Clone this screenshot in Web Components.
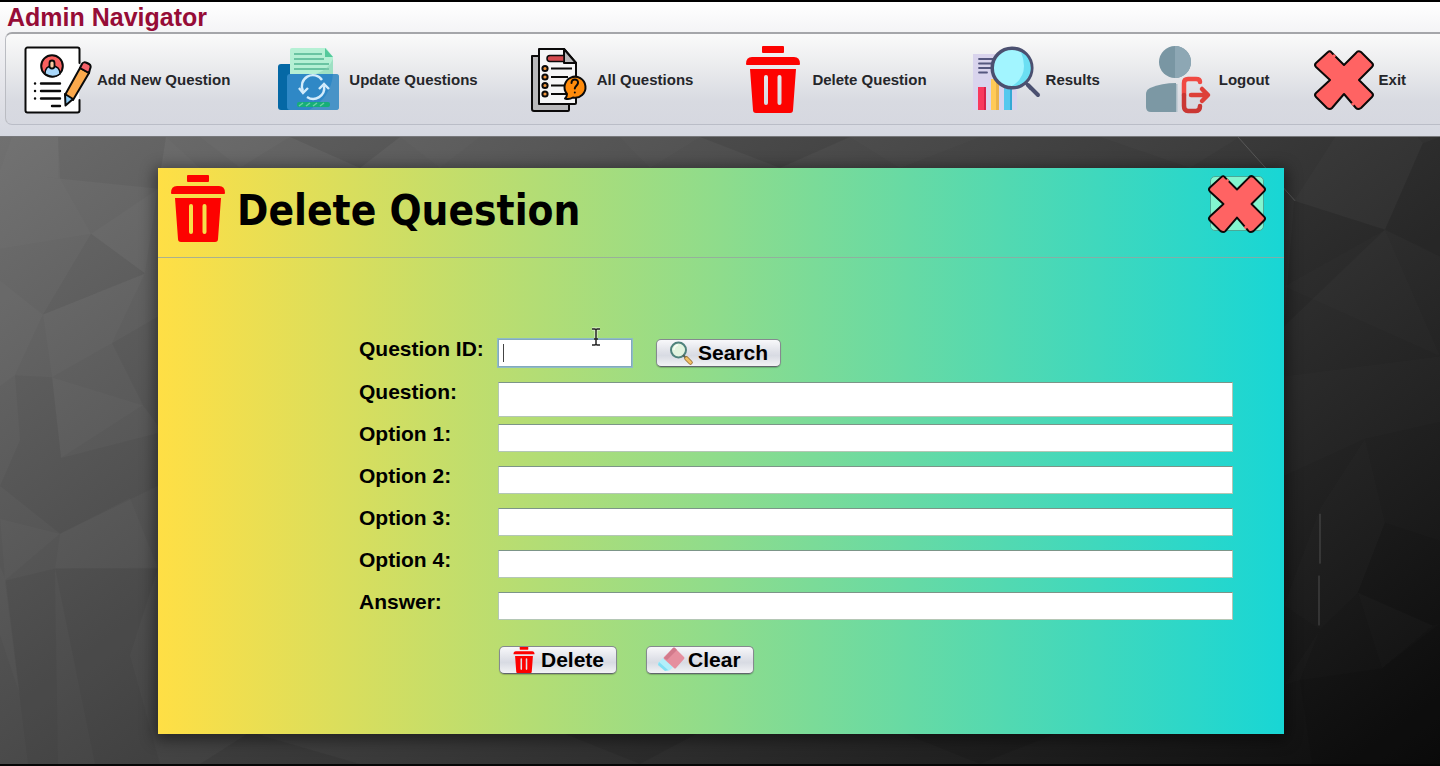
<!DOCTYPE html>
<html lang="en">
<head>
<meta charset="utf-8">
<title>Admin Navigator</title>
<style>
  body { margin: 0; font-family: "Liberation Sans", Arial, sans-serif; }
</style>
</head>
<body>
<admin-page></admin-page>

<script>
const TRASH = `
    <g fill="#fd0200">
      <rect x="26" y="2" width="22" height="7" rx="1"/>
      <path d="M16 13h42q6 0 6 7 0 1-1 1H11q-1 0-1-1 0-7 6-7z"/>
      <path fill-rule="evenodd" d="M14 25h46l-3 41q0 3-3 3H20q-3 0-3-3zM30 31q-2 0-2 2v26q0 2 2 2t2-2V33q0-2-2-2zM43.500 31q-2 0-2 2v26q0 2 2 2t2-2V33q0-2-2-2z"/>
    </g>`;

const ICONS = {
  add: ['0 0 72 72', `
    <g stroke="#0a0a0a" stroke-width="2" stroke-linecap="round" stroke-linejoin="round">
      <path fill="#fff" stroke="none" d="M5 4h53v64H5z"/>
      <path fill="none" d="M58.500 19V5.500a2 2 0 0 0-2-2H6.500a2 2 0 0 0-2 2v61a2 2 0 0 0 2 2h50a2 2 0 0 0 2-2V56"/>
      <circle cx="31" cy="22" r="10.800" fill="#f9605f"/>
      <path fill="#a9d8fb" d="M24 30c0-6 3-8 7-8s8 2 8 8q-7 5-15 0z" stroke-width="1.500"/>
      <path fill="#f9c9a0" d="M28.500 19a2.500 2.500 0 0 1 5 0v3a2.500 2.500 0 0 1-5 0z" stroke-width="1.800"/>
      <path fill="none" stroke-width="2.400" d="M20 39.500h19M20 47h19M20 54.500h19M31 62h8M14 39.500h.1M14 47h.1M14 54.500h.1"/>
      <path fill="#fba94c" d="M59 24l9 5-16 27-8-5z"/>
      <path fill="#f5626a" d="M59 24l2-4c1-2 3-2 5-1l2 1c2 1 2 3 1 5l-1 4z"/>
      <path fill="#8ccbf5" d="M44 50l8 5-7.500 6.500z"/>
    </g>`],
  update: ['0 0 72 72', `
    <rect x="5" y="20" width="16" height="46" rx="3" fill="#0568a5"/>
    <path fill="#b5f0d4" d="M17 6a2 2 0 0 1 2-2h34l7 9v26H17z"/>
    <path fill="#54c99b" d="M52 4l8 9h-8z"/>
    <path stroke="#51b591" stroke-width="1.500" d="M21 10h28M21 15h30M21 20h35M21 25h35"/>
    <path fill="#82cdb0" opacity=".45" d="M60 15v15H43q13-5 17-15z"/>
    <rect x="14" y="30" width="52" height="36" rx="3" fill="#2f88c6"/>
    <path fill="#5299c7" opacity=".7" d="M60 30h3a3 3 0 0 1 3 3v30a3 3 0 0 1-3 3H36q22-12 24-36z"/>
    <g fill="none" stroke="#d3ecfb" stroke-width="2.400">
      <path d="M49 36A11 11 0 0 0 30 47M34 53A11 11 0 0 0 51 42"/>
      <path d="M26 44l4 5 5-5M46 45l5-5 5 5"/>
    </g>
    <rect x="24" y="58" width="33" height="5" rx="2" fill="#16ae78"/>
    <path stroke="#69d1a2" stroke-width="1.500" d="M26 62l4-3M33 62l4-3M40 62l4-3M47 62l4-3"/>`],
  all: ['0 0 72 72', `
    <g stroke="#0b0a0a" stroke-width="2" stroke-linejoin="round">
      <path fill="#b9b9bb" d="M11 12h37v54a1 1 0 0 1-1 1H13a2 2 0 0 1-2-2z"/>
      <path fill="#f6f6f7" d="M18 5h25l12 14v40a1 1 0 0 1-1 1H18z"/>
      <path fill="#b9b9bb" d="M43 5v14h12z"/>
      <path fill="#d44a4e" stroke-width="1.500" d="M43 11.500H29a3 3 0 0 0 0 6h14z"/>
      <g fill="#f2963c"><circle cx="24" cy="24.500" r="2.600"/><circle cx="24" cy="33" r="2.600"/><circle cx="24" cy="41.500" r="2.600"/><circle cx="24" cy="50" r="2.600"/></g>
      <path d="M30 24.500h21M30 33h17M30 41.500h13M30 50h15"/>
      <path fill="#ff8b0b" d="M46 50A10.500 10.500 0 1 1 52 53.500Q48 56 44 54.500Q46 53 46 50z"/>
      <path fill="none" stroke-linecap="round" d="M50.500 39c0-5 7-4.500 6.500 0-.500 3-3.200 3-3.200 5.500M53.800 48.500v.1"/>
    </g>`],
  trash: ['0 0 72 72', TRASH],
  bin: ['10 2 54 67', TRASH],
  results: ['0 0 72 72', `
    <path fill="#d9d4ed" d="M3 10h44v56H3z"/>
    <path stroke="#55577f" stroke-width="1.800" stroke-linecap="round" d="M9 15h14M9 19.500h13M9 24h14M9 28.500h8"/>
    <path fill="#f9385e" d="M8 43h8v23H8z"/><path fill="#d8214b" d="M14 43h2v23h-2z"/>
    <path fill="#ffca56" d="M21 35h8v31h-8z"/><path fill="#eab34a" d="M26 35h3v31h-3z"/>
    <path fill="#57c8ee" d="M34 43h8v23h-8z"/><path fill="#35a9d5" d="M40 43h2v23h-2z"/>
    <path stroke="#4b5070" stroke-width="4" stroke-linecap="round" d="M58 41l10 10"/>
    <path stroke="#4b5070" stroke-width="3" d="M55 38l6 7"/>
    <circle cx="42" cy="24" r="19.800" fill="#a2f5ff" stroke="#4b5070" stroke-width="3.500"/>
    <path fill="#6bdff3" d="M51 8a18 18 0 0 1-9 34q18-11 9-34z"/>`],
  logout: ['2 0 72 72', `
    <circle cx="34" cy="18" r="16" fill="#7996a3"/>
    <path fill="#8da7b4" d="M34 2a16 16 0 0 1 0 32z"/>
    <path fill="#7c98a4" d="M5 50q0-4 4-6 12-5 26-5v29H10q-5 0-5-5z"/>
    <path fill="#afc0c9" d="M35 40h1.500v28H35z"/>
    <g fill="none" stroke-width="4.500" stroke-linecap="round" stroke-linejoin="round">
      <path stroke="#f04a43" d="M59 38q0-3-4-3h-8q-4 0-4 4v12"/>
      <path stroke="#ca3733" d="M59 62q0 5-4 5h-8q-4 0-4-5V51"/>
      <path stroke="#dd4038" d="M50 51h16M61 45l6 6-6 6"/>
    </g>`],
  exit: ['0 0 62 72', `
    <path fill="#ff6363" stroke="#0b0908" stroke-width="2" stroke-linejoin="round" d="M15 8Q17 6 19 9L31 21 43 9Q45 6 48 8L59 19Q61 21 59 23L46 36 59 49Q61 51 59 53L48 64Q45 66 43 64L31 50 19 64Q17 66 14 64L3 53Q1 51 3 49L17 36 3 23Q1 21 3 19Z"/>
    <path stroke="#ff6363" stroke-width="3" d="M20 11l2 2M39 59l2 2"/>`],
  search: ['0 0 24 24', `
    <circle cx="9.500" cy="9" r="7.500" fill="#e2f3df" stroke="#4f827c" stroke-width="2"/>
    <path stroke="#f7fcf5" stroke-width="1.500" fill="none" d="M5 9q0-4 4-5"/>
    <path stroke="#57645a" stroke-width="2" d="M14 14l4 4"/>
    <path stroke="#9a7132" stroke-width="4.500" stroke-linecap="round" d="M17.500 17.500l4 4"/>
    <path stroke="#f2c064" stroke-width="2.800" stroke-linecap="round" d="M17.500 17.500l4 4"/>`],
  eraser: ['0 0 24 24', `
    <path fill="#b3effa" d="M4 10l10 9-3 3q-3 2-5 0l-6-5q-2-2 0-3z"/>
    <path fill="#81dff4" d="M0 14l9 8-3 1-7-6z"/>
    <path fill="#e58f9e" d="M14 0q1-1 2 0l9 9q1 1 0 2l-8 9q-1 1-2 0l-10-9q-1-1 0-2z"/>
    <path fill="#d27a8b" d="M14 0q1-1 2 0l2 2-10 10-3-2z"/>`]
};

class AppIcon extends HTMLElement {
  connectedCallback() {
    const [box, art] = ICONS[this.getAttribute('name')];
    this.attachShadow({ mode: 'open' }).innerHTML = `
      <style>:host { display: block; flex: none; } svg { display: block; width: 100%; height: 100%; overflow: visible; }</style>
      <svg viewBox="${box}" aria-hidden="true">${art}</svg>`;
  }
}
customElements.define('app-icon', AppIcon);

class NavItem extends HTMLElement {
  connectedCallback() {
    this.attachShadow({ mode: 'open' }).innerHTML = `
      <style>
        :host { display: block; flex: none; }
        button { display: flex; align-items: center; gap: 4px; padding: 0; border: 0; background: none;
          font: bold 15px/20px "Liberation Sans", Arial, sans-serif; color: #25262a; white-space: nowrap; }
        app-icon { width: var(--icon-width, 72px); height: 72px; }
      </style>
      <button type="button"><app-icon name="${this.getAttribute('icon')}"></app-icon><span><slot></slot></span></button>`;
  }
}
customElements.define('nav-item', NavItem);

class NavBar extends HTMLElement {
  connectedCallback() {
    this.attachShadow({ mode: 'open' }).innerHTML = `
      <style>
        :host { display: block; box-sizing: border-box; border-top: 2px solid #000; padding: 3px 0 12px 5px;
          background: linear-gradient(#fff, #f4f4f6 30px, #dfe0e6 100px, #d5d8e1); overflow: hidden; }
        h1 { margin: 0 2px 3px; font-size: 25px; line-height: 24px; color: #960c37; }
        nav { display: flex; gap: 43px; padding: 10px 15px 8px; border: solid #a5a6aa; border-width: 2px 0 1px 1px;
          border-bottom-color: #babdc7; border-left-color: #babcc2; border-radius: 7px 0 0 7px;
          background: linear-gradient(#fafafa, #ebecee 35%, #d8dae1 75%, #d6d8e0); }
      </style>
      <h1><slot name="title"></slot></h1>
      <nav aria-label="Main"><slot></slot></nav>`;
  }
}
customElements.define('nav-bar', NavBar);

class PushButton extends HTMLElement {
  connectedCallback() {
    this.attachShadow({ mode: 'open' }).innerHTML = `
      <style>
        :host { display: block; flex: none; }
        button { box-sizing: border-box; display: flex; align-items: center; gap: 5px; height: 28px; padding: 0 12px;
          border: 1px solid #85898f; border-bottom-color: #60666b; border-radius: 5px;
          background: linear-gradient(#f8f8fa, #dfe1e8 45%, #d8dbe3 60%, #f2f3f5);
          box-shadow: 0 1px 1px rgba(0,0,0,.2);
          font: bold 21px/24px "Liberation Sans", Arial, sans-serif; color: #000; white-space: nowrap; }
        app-icon { width: 24px; height: 26px; }
      </style>
      <button type="button"><app-icon name="${this.getAttribute('icon')}"></app-icon><span><slot></slot></span></button>`;
  }
}
customElements.define('push-button', PushButton);

class FormField extends HTMLElement {
  connectedCallback() {
    const active = this.hasAttribute('active');
    this.attachShadow({ mode: 'open' }).innerHTML = `
      <style>
        :host { display: grid; grid-template-columns: 139px 1fr; align-items: start; height: 42px; }
        :host([active]) { height: 43px; }
        label { font-weight: bold; font-size: 21px; line-height: 20px; color: #000; white-space: nowrap; }
        .line { display: flex; gap: 24px; align-items: flex-start; }
        .box { position: relative; flex: 1; display: flex; }
        input { box-sizing: border-box; width: 100%; height: 28px; margin: 0; padding: 0 4px; outline: 0; background: #fff;
          border: 1px solid #b4c7b5; border-top-color: #7c9588; border-radius: 0; font: 16px "Liberation Sans", Arial, sans-serif; }
        :host([tall]) input { height: 35px; }
        :host([active]) .box { flex: 0 0 134px; }
        :host([active]) input { border-color: #83a9bd; box-shadow: 0 0 0 1px #8ebbc6; }
        .caret { position: absolute; left: 5px; top: 5px; width: 1px; height: 18px; background: #444; }
        .pointer { position: absolute; left: 93px; top: -12px; width: 10px; height: 20px; }
      </style>
      <label for="value">${this.getAttribute('label')}</label>
      <div class="line">
        <div class="box"><input id="value" type="text">${active ? `
          <i class="caret"></i>
          <svg class="pointer" viewBox="0 0 10 20" fill="none" aria-hidden="true">
            <path stroke="#fff" stroke-opacity=".7" stroke-width="3" d="M1 2h8M5 2v16M1 18h8"/>
            <path stroke="#222" stroke-width="1.500" d="M1 2h3l1 1 1-1h3M5 3v14M1 18h3l1-1 1 1h3M3 12h4"/>
          </svg>` : ''}</div>
        <slot></slot>
      </div>`;
  }
}
customElements.define('form-field', FormField);

class DialogPanel extends HTMLElement {
  connectedCallback() {
    this.attachShadow({ mode: 'open' }).innerHTML = `
      <style>
        :host { display: block; box-sizing: border-box; background: linear-gradient(90deg, #ffdf45, #8edc8c 50%, #18d6d5);
          box-shadow: 0 3px 14px 3px rgba(0,0,0,.45); }
        header { box-sizing: border-box; height: 90px; display: flex; align-items: flex-start; padding: 5px 16px 0 3px;
          border-bottom: 1px solid rgba(150,165,160,.8); }
        header app-icon { width: 72px; height: 72px; }
        h2 { flex: 1; margin: 0; padding-left: 4px; font: bold 42px/76px "DejaVu Sans Condensed", "Noto Sans", sans-serif; color: #000; white-space: nowrap; }
        button { box-sizing: border-box; display: flex; align-items: center; justify-content: center; width: 54px; height: 55px;
          margin: 3px 4px 0 0; padding: 0; border: 1px solid #4ba997; border-radius: 5px; background: #83f5cf; }
        button app-icon { width: 60px; height: 72px; }
        form { padding: 81px 51px 60px 201px; }
        footer { display: flex; gap: 29px; padding: 12px 0 0 140px; }
      </style>
      <header>
        <app-icon name="trash"></app-icon>
        <h2><slot name="title"></slot></h2>
        <button type="button" aria-label="Close"><app-icon name="exit"></app-icon></button>
      </header>
      <form>
        <slot></slot>
        <footer><slot name="actions"></slot></footer>
      </form>`;
  }
}
customElements.define('dialog-panel', DialogPanel);

class PolyBackdrop extends HTMLElement {
  connectedCallback() {
    this.attachShadow({ mode: 'open' }).innerHTML = `
      <style>
        :host { position: relative; display: grid; box-sizing: border-box; padding: 31px 156px 30px 158px; border: solid #77787b;
          border-width: 1px 0 2px; border-bottom-color: #060606;
          margin-top: -1px; background: linear-gradient(144deg, #707070, #0b0b0b); }
        svg { position: absolute; inset: 0; width: 100%; height: 100%; }
        ::slotted(*) { position: relative; }
      </style>
      <svg viewBox="0 0 1440 629" preserveAspectRatio="none" aria-hidden="true">
        <g fill="#fff">
          <path fill-opacity=".02" d="M0 34L12 0H58V42zM0 112L91 97 60 42 0 34zM91 97L158 52 145 137zM0 144L43 178 0 185zM43 178L145 137 112 207 52 241zM0 185L43 178 15 239 0 250zM52 241L143 269 61 322zM60 398L130 362 158 432 55 433zM0 383L60 398 5 445zM166 0L158 52 200 31zM200 0L290 0 240 31zM0 430L6 445 20 560 0 500z"/>
          <path fill-opacity=".015" d="M400 0H480L440 31zM620 0H700L650 31zM850 0H980L900 31zM1100 0H1240L1190 31zM1335 0H1418L1423 6 1385 93 1294 64z"/>
          <path fill-opacity=".012" d="M1284 340L1365 303 1440 286V220L1284 240zM1365 303L1385 387 1320 373zM1320 373L1385 387 1358 457 1320 494 1284 470zM1284 150L1385 93 1440 220zM1358 457L1433 490 1382 533zM1284 550L1320 494 1300 545z"/>
        </g>
        <g fill="#000">
          <path fill-opacity=".04" d="M58 0H166L158 52 60 42zM91 97L145 137 43 178zM112 207L158 180V290L143 269zM15 239L52 241 61 322 20 304zM61 322L158 297V350L60 398zM60 398L0 350 20 304 61 322zM55 433H158L130 520 160 629H95zM5 445L55 433 58 629H28z"/>
          <path fill-opacity=".07" d="M290 0H400L360 31zM700 0H850L780 31zM250 597L360 629H200zM560 597H700L640 629zM900 597H1060L980 629zM1294 64L1385 93 1284 190zM1423 6L1440 0V120L1385 93zM1385 387L1440 405V488L1433 490 1358 457zM1300 545L1382 533 1380 629H1312zM1382 533L1440 488V629H1380z"/>
        </g>
        <path fill="none" stroke="#666" stroke-opacity=".7" d="M1238 0L1295 64M1320 378V428M1319 440V490"/>
      </svg>
      <slot></slot>`;
  }
}
customElements.define('poly-backdrop', PolyBackdrop);

class AdminPage extends HTMLElement {
  connectedCallback() {
    this.attachShadow({ mode: 'open' }).innerHTML = `
      <style>
        :host { display: flex; flex-direction: column; min-height: 100vh; }
        poly-backdrop { flex: 1; }
        .exit { --icon-width: 62px; }
      </style>
      <nav-bar>
        <span slot="title">Admin Navigator</span>
        <nav-item icon="add">Add New Question</nav-item>
        <nav-item icon="update">Update Questions</nav-item>
        <nav-item icon="all">All Questions</nav-item>
        <nav-item icon="trash">Delete Question</nav-item>
        <nav-item icon="results">Results</nav-item>
        <nav-item icon="logout">Logout</nav-item>
        <nav-item icon="exit" class="exit">Exit</nav-item>
      </nav-bar>
      <poly-backdrop>
        <dialog-panel>
          <span slot="title">Delete Question</span>
          <form-field label="Question ID:" active><push-button icon="search">Search</push-button></form-field>
          <form-field label="Question:" tall></form-field>
          <form-field label="Option 1:"></form-field>
          <form-field label="Option 2:"></form-field>
          <form-field label="Option 3:"></form-field>
          <form-field label="Option 4:"></form-field>
          <form-field label="Answer:"></form-field>
          <push-button slot="actions" icon="bin">Delete</push-button>
          <push-button slot="actions" icon="eraser">Clear</push-button>
        </dialog-panel>
      </poly-backdrop>`;
  }
}
customElements.define('admin-page', AdminPage);
</script>
</body>
</html>
